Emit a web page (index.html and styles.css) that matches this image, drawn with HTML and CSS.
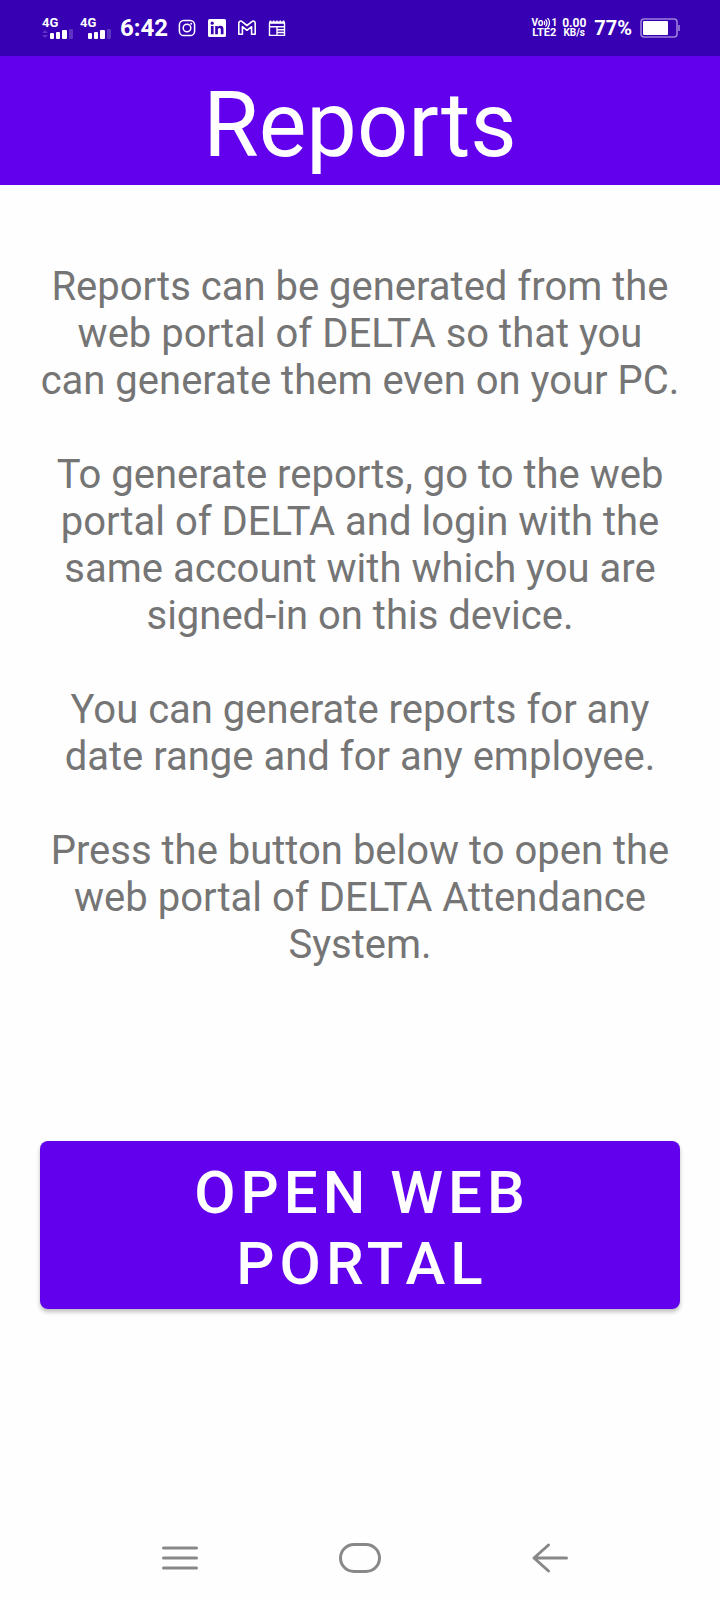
FILE: index.html
```html
<!DOCTYPE html>
<html lang="en">

<head>
    <meta charset="UTF-8">
    <meta name="viewport" content="width=device-width, initial-scale=1.0">
    <title>Reports</title>
    <link rel="stylesheet" href="styles.css">
</head>

<body>
    <div class="status">
        <div class="status_left">
            <div class="signal">
                <span>4G</span>
                <svg width="32" height="10" viewBox="0 0 32 10" fill="#fff">
                    <path d="M0 4l3-3 3 3zM0 6l3 3 3-3z" opacity=".2" />
                    <rect x="8" y="4" width="4" height="6" rx="1" />
                    <rect x="14" y="3" width="4" height="7" rx="1" />
                    <rect x="20" y="1" width="5" height="9" rx="1" />
                    <rect x="27" y="0" width="4" height="10" rx="1" opacity=".2" />
                </svg>
            </div>
            <div class="signal">
                <span>4G</span>
                <svg width="32" height="10" viewBox="0 0 32 10" fill="#fff">
                    <rect x="8" y="4" width="4" height="6" rx="1" />
                    <rect x="14" y="3" width="4" height="7" rx="1" />
                    <rect x="20" y="1" width="5" height="9" rx="1" />
                    <rect x="27" y="0" width="4" height="10" rx="1" opacity=".2" />
                </svg>
            </div>
            <span class="time">6:42</span>
            <div class="apps">
                <!-- instagram -->
                <svg width="20" height="20" viewBox="0 0 20 20" fill="none" stroke="#fff" stroke-width="1.5">
                    <rect x="2.4" y="2.4" width="15.2" height="15.2" rx="4.4" />
                    <circle cx="10" cy="10" r="3.8" />
                    <circle cx="14.2" cy="5.8" r="1" fill="#fff" stroke="none" />
                </svg>
                <!-- linkedin -->
                <svg width="20" height="20" viewBox="0 0 20 20">
                    <rect x="1" y="1" width="18" height="18" rx="1.5" fill="#fff" />
                    <circle cx="5.2" cy="5.2" r="1.6" fill="#3700b3" />
                    <path d="M3.9 8h2.7v8.2H3.9zM8.2 8h2.6v1.1c.5-.8 1.4-1.3 2.6-1.3 2.5 0 3.1 1.6 3.1 3.8v4.6h-2.7v-4.1c0-1.1-.1-2.1-1.4-2.1s-1.5 1-1.5 2v4.2H8.2z" fill="#3700b3" />
                </svg>
                <!-- gmail -->
                <svg width="20" height="20" viewBox="0 0 20 20" fill="none" stroke="#fff" stroke-width="1.6" stroke-linejoin="round">
                    <path d="M1.8 16.3V5c0-1.8 2-2.5 3.3-1.4L10 7.5l4.9-3.9C16.2 2.5 18.2 3.2 18.2 5v11.3h-3.6V8.7L10 12.3 5.4 8.7v7.6z" />
                </svg>
                <!-- calendar -->
                <svg width="20" height="20" viewBox="0 0 20 20" fill="none" stroke="#fff" stroke-width="1.4">
                    <path d="M2.5 5v12.4h15V5M2.5 8.8h15M10 8.8v8.6M10 11.7h7.5M10 14.5h7.5" />
                    <path d="M2 4.6h16" stroke-width="2.4" />
                    <path d="M3.5 2.5v2M6.7 2.5v2M10 2.5v2M13.3 2.5v2M16.5 2.5v2" />
                </svg>
            </div>
        </div>
        <div class="status_right">
            <div class="network">
                <div class="volte">
                    <div class="volte_top">
                        <span>Vo</span>
                        <svg width="6" height="10" viewBox="0 0 6 10" fill="none" stroke="#fff" stroke-width="1.2">
                            <path d="M0 3q1.5 2 0 4M1.5 1.5q3 3.5 0 7M3.5 0q4 5 0 10" />
                        </svg>
                        <span>1</span>
                    </div>
                    <div class="lte">LTE2</div>
                </div>
                <div class="speed">
                    <div>0.00</div>
                    <div class="unit">KB/s</div>
                </div>
            </div>
            <span class="percent">77%</span>
            <svg width="40" height="20" viewBox="0 0 40 20">
                <rect x="1" y="1" width="36" height="18" rx="3" fill="none" stroke="#fff" stroke-width="1.6" opacity=".5" />
                <rect x="3" y="3" width="25" height="14" rx="1" fill="#fff" />
                <path d="M39 7v6" stroke="#fff" stroke-width="1.6" opacity=".5" />
            </svg>
        </div>
    </div>

    <header class="header">
        <h1>Reports</h1>
    </header>

    <main class="content">
        <p>Reports can be generated from the web portal of DELTA so that you can&nbsp;generate them even on your PC.</p>
        <p>To generate reports, go to the web portal of DELTA and login with the same account with which you are signed-in on this device.</p>
        <p>You can generate reports for any date range and for any employee.</p>
        <p>Press the button below to open the web portal of DELTA Attendance System.</p>
        <button class="open" type="button">OPEN WEB PORTAL</button>
    </main>

    <nav class="nav">
        <button type="button" aria-label="Recent apps">
            <svg width="64" height="40" viewBox="0 0 64 40">
                <path d="M15.5 10h33M15.5 20h33M15.5 30h33" />
            </svg>
        </button>
        <button type="button" aria-label="Home">
            <svg width="64" height="40" viewBox="0 0 64 40">
                <rect x="12.5" y="6.5" width="39" height="27" rx="13.5" />
            </svg>
        </button>
        <button type="button" aria-label="Back">
            <svg width="64" height="40" viewBox="0 0 64 40">
                <path d="M58.5 20H26M40.5 7L26 20l14.5 13" />
            </svg>
        </button>
    </nav>
</body>

</html>
```
FILE: styles.css
```css
* {
    margin: 0;
    padding: 0;
    box-sizing: border-box;
}

body {
    display: flex;
    flex-direction: column;
    min-height: 100vh;
    font-family: Roboto, "Liberation Sans", sans-serif;
    background-color: #fefefe;
}

svg {
    display: block;
}

/* status bar */
.status {
    display: flex;
    justify-content: space-between;
    align-items: center;
    height: 56px;
    padding: 0 40px 0 42px;
    color: #fff;
    background-color: #3700b3;
}

.status_left,
.status_right,
.network,
.apps {
    display: flex;
    align-items: center;
}

.status_left {
    gap: 6px;
}

.signal {
    font-size: 13px;
    font-weight: 700;
    line-height: 12px;
}

.signal span {
    display: block;
}

.time {
    padding: 0 3px 0 2px;
    font-size: 24px;
    font-weight: 700;
}

.apps {
    gap: 10px;
}

.status_right {
    gap: 8px;
}

.network {
    gap: 5px;
}

.volte,
.speed {
    font-size: 12px;
    font-weight: 700;
    line-height: 10px;
    text-align: center;
}

.volte {
    font-size: 10px;
}

.volte_top {
    display: flex;
    gap: 1px;
}

.volte .lte {
    font-size: 11px;
}

.speed .unit {
    font-size: 10px;
}

.percent {
    font-size: 20px;
    font-weight: 700;
}

/* title */
.header {
    padding: 17px 40px 7px;
    color: #fff;
    background-color: #6200ee;
    text-align: center;
}

.header h1 {
    font-size: 90px;
    font-weight: 400;
    line-height: 105px;
}

/* text */
.content {
    flex: 1;
    padding: 78px 40px 0;
    color: #757575;
    font-size: 40px;
    line-height: 47px;
    text-align: center;
}

.content p {
    margin-bottom: 47px;
}

.open {
    display: block;
    width: 100%;
    margin-top: 173px;
    padding: 16px 116px 10px 120px;
    border: none;
    border-radius: 8px;
    color: #fff;
    background-color: #6200ee;
    box-shadow: 0 3px 4px rgba(0, 0, 0, .25);
    font-family: inherit;
    font-size: 60px;
    font-weight: 500;
    line-height: 71px;
    letter-spacing: 5px;
    cursor: pointer;
}

/* bottom buttons */
.nav {
    display: grid;
    grid-template-columns: repeat(3, 1fr);
    justify-items: center;
    padding: 22px 12.5%;
}

.nav button {
    border: none;
    background: none;
    cursor: pointer;
}

.nav svg {
    fill: none;
    stroke: #888;
    stroke-width: 3;
    stroke-linecap: round;
    stroke-linejoin: round;
}
```
